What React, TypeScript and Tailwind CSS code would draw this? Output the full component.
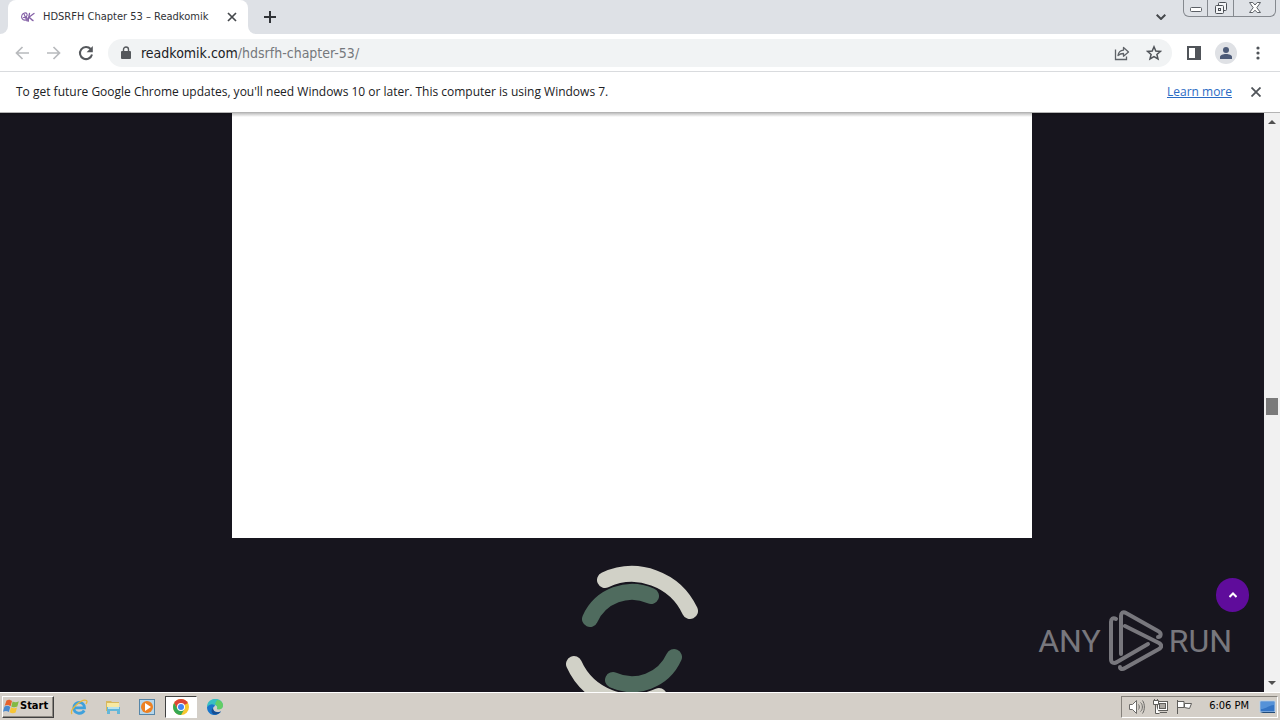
import type { ReactNode } from "react";

function TabStrip() {
  return (
    <header className="flex h-[34px] shrink-0 items-start bg-[#dee1e6]">
      <div className="flex h-full w-2 items-end bg-white">
        <div className="h-full w-2 rounded-br-lg bg-[#dee1e6]" />
      </div>
      <div className="flex h-full w-[240px] items-center rounded-t-lg bg-white pl-3 pr-2">
        <svg width="16" height="16" viewBox="0 0 16 16" fill="none" stroke="#8460a6" strokeLinecap="round" aria-hidden="true">
          <path d="M6 11C2 12 1 8 2 6S6 3 7 5 5 9 3.500 8.500M4 5l3 7M6.500 8l2 4" strokeWidth="1.100" />
          <path d="M9.500 4.500 8 12M14 4.500C12 6 10 7 9 8.500c1.500 0 2 2.500 4 3" strokeWidth="1.300" />
        </svg>
        <span className="ml-[7px] flex-1 whitespace-nowrap text-[11px] text-[#303236]">HDSRFH Chapter 53 – Readkomik</span>
        <button aria-label="Close tab" className="flex size-4 items-center justify-center">
          <svg width="10" height="10" viewBox="0 0 10 10" stroke="#45484c" strokeWidth="1.700"><path d="m1 1 8 8M9 1 1 9" /></svg>
        </button>
      </div>
      <div className="h-full w-2 bg-white">
        <div className="h-full w-2 rounded-bl-lg bg-[#dee1e6]" />
      </div>
      <button aria-label="New tab" className="flex h-full w-7 items-center justify-center">
        <svg width="12" height="12" viewBox="0 0 12 12" stroke="#303337" strokeWidth="2"><path d="M6 0v12M0 6h12" /></svg>
      </button>
      <div className="flex-1" />
      <button aria-label="Search tabs" className="mr-[14px] flex h-full w-4 items-center justify-center">
        <svg width="10" height="6" viewBox="0 0 10 6" fill="none" stroke="#45484c" strokeWidth="2"><path d="m.7.7 4.300 4.300L9.300.7" /></svg>
      </button>
      <div className="mr-1 flex h-[17px] rounded-b-md border border-t-0 border-[#85898f]">
        <button aria-label="Minimize" className="flex w-6 items-end justify-center border-r border-[#85898f] pb-1">
          <svg width="12" height="5" viewBox="0 0 12 5" fill="#fff" stroke="#5c6066"><rect x=".5" y=".5" width="11" height="4" rx="1" /></svg>
        </button>
        <button aria-label="Restore" className="flex w-[26px] items-center justify-center border-r border-[#85898f]">
          <svg width="14" height="14" viewBox="0 0 14 14" fill="#f4f5f7" stroke="#4c5056">
            <rect x="4.500" y="1.500" width="8" height="8" rx="1" />
            <rect x="1.500" y="4.500" width="8" height="8" rx="1" />
            <rect x="4.500" y="7.500" width="2" height="2" />
          </svg>
        </button>
        <button aria-label="Close" className="flex w-[41px] items-center justify-center">
          <svg width="12" height="12" viewBox="0 0 12 12" fill="#fff" stroke="#5c6066" strokeLinejoin="round">
            <path d="M.5.500h3.300L6 3l2.200-2.500h3.300L7.800 5.700l3.700 4.800H8.200L6 8.200l-2.200 2.300H.5l3.700-4.800Z" />
          </svg>
        </button>
      </div>
    </header>
  );
}

function Toolbar() {
  return (
    <nav className="flex h-[38px] shrink-0 items-center border-b border-[#d9dbde] bg-white pl-2 pr-[14px]">
      <button aria-label="Back" className="flex h-7 w-7 items-center justify-center">
        <svg width="14" height="14" viewBox="0 0 14 14" fill="none" stroke="#b8babd" strokeWidth="1.700"><path d="M14 7H1.500M7.500 1l-6 6 6 6" /></svg>
      </button>
      <button aria-label="Forward" className="ml-1 flex h-7 w-7 items-center justify-center">
        <svg width="14" height="14" viewBox="0 0 14 14" fill="none" stroke="#b8babd" strokeWidth="1.700"><path d="M0 7h12.500M6.500 1l6 6-6 6" /></svg>
      </button>
      <button aria-label="Reload" className="ml-1 flex h-7 w-7 items-center justify-center">
        <svg width="16" height="16" viewBox="0 0 16 16" fill="none" stroke="#55585c" strokeWidth="2">
          <path d="M12.700 4A6.100 6.100 0 1 0 14 9.500" /><path d="M14.800 1v6.200H8.600Z" fill="#55585c" stroke="none" />
        </svg>
      </button>
      <div className="ml-2 flex h-7 min-w-0 flex-1 items-center rounded-full bg-[#f1f3f4] pl-3 pr-[10px]">
        <svg width="12" height="14" viewBox="0 0 12 14" aria-hidden="true">
          <rect x="1" y="5" width="10" height="8" rx="1" fill="#55585c" />
          <path d="M3.500 6V3.500a2.500 2.500 0 0 1 5 0V6" fill="none" stroke="#55585c" strokeWidth="1.400" />
        </svg>
        <a href="#" className="ml-[9px] flex-1 whitespace-nowrap text-sm text-[#75787c]">
          <span className="text-[#202124]">readkomik.com</span>/hdsrfh-chapter-53/
        </a>
        <button aria-label="Share this page" className="flex size-4 items-center justify-center">
          <svg width="16" height="16" viewBox="0 0 16 16" fill="none" stroke="#5f6368" strokeWidth="1.300">
            <path d="M1.500 4.500v10h11v-3" />
            <path d="M4 10.500C4.500 7 6.500 5.400 9.500 5.200V2.500L14.500 7l-5 4.200V8.500C7.500 8.500 5.500 9 4 10.500Z" strokeLinejoin="round" />
          </svg>
        </button>
        <button aria-label="Bookmark this page" className="ml-4 flex size-4 items-center justify-center">
          <svg width="16" height="16" viewBox="0 0 16 16" fill="none" stroke="#505459" strokeWidth="1.500">
            <path d="m8 1.800 1.800 4.200 4.600.4-3.500 3 1.100 4.500L8 11.500l-4 2.400 1.100-4.500-3.500-3 4.600-.4Z" />
          </svg>
        </button>
      </div>
      <button aria-label="Side panel" className="ml-[14px] flex size-4 items-center justify-center">
        <svg width="14" height="14" viewBox="0 0 14 14"><path d="M0 0h14v14H0ZM2 2v10h6V2Z" fill="#505459" fillRule="evenodd" /></svg>
      </button>
      <button aria-label="Profile" className="ml-[13px] flex size-[22px] items-center justify-center rounded-full bg-[#dfe1e5]">
        <svg width="12" height="12" viewBox="0 0 12 12" fill="#4d5b78"><circle cx="6" cy="3" r="3" /><path d="M0 12v-2c0-2 3-3 6-3s6 1 6 3v2Z" /></svg>
      </button>
      <button aria-label="Menu" className="ml-[13px] flex h-7 w-4 items-center justify-center">
        <svg width="4" height="14" viewBox="0 0 4 14" fill="#505459"><circle cx="2" cy="2" r="1.600" /><circle cx="2" cy="7" r="1.600" /><circle cx="2" cy="12" r="1.600" /></svg>
      </button>
    </nav>
  );
}

function InfoBar() {
  return (
    <section className="flex h-[41px] shrink-0 items-center border-b border-[#b4b4b4] bg-white px-4 font-['Open_Sans','Noto_Sans',sans-serif] text-xs text-[#202124]">
      <p className="flex-1 whitespace-nowrap">To get future Google Chrome updates, you'll need Windows 10 or later. This computer is using Windows 7.</p>
      <a href="#" className="text-[#2a6bc4] underline">Learn more</a>
      <button aria-label="Dismiss" className="ml-4 flex size-4 items-center justify-center">
        <svg width="10" height="10" viewBox="0 0 10 10" stroke="#505459" strokeWidth="1.800"><path d="m.5.500 9 9M9.500.500l-9 9" /></svg>
      </button>
    </section>
  );
}

function Spinner() {
  return (
    <svg className="mx-auto block" width="200" height="200" viewBox="-100 -100 200 200" fill="none" strokeWidth="16" strokeLinecap="round" role="img" aria-label="Loading">
      <path d="M-27-58A64 64 0 0 1 58-27M27 58A64 64 0 0 1-58 26" stroke="#d1d1c7" />
      <path d="M-42-19A46 46 0 0 1 19-42M42 19A46 46 0 0 1-19 42" stroke="#4f6b5e" />
    </svg>
  );
}

function Watermark() {
  return (
    <div className="absolute bottom-5 right-8 flex items-center gap-[6px] font-['Roboto','Liberation_Sans',sans-serif] text-[32px] leading-[62px] text-[#78777d]">
      <span>ANY</span>
      <svg width="56" height="62" viewBox="4 3 56 62" fill="none" stroke="#78777d" strokeWidth="4" strokeLinejoin="round" strokeLinecap="round" aria-hidden="true">
        <path d="M18 47V9c0-3 2-5 5-3l32 18c4 2 3 6 0 6" />
        <path d="M13 12c-3-2-5 0-5 3v37c0 4 3 5 6 3l31-18" />
        <path d="m22 19 34 17c3 2 3 4 0 6L22 61c-3 2-5 1-5-1" />
      </svg>
      <span>RUN</span>
    </div>
  );
}

function Page() {
  return (
    <div className="flex min-h-0 flex-1">
      <main className="relative min-w-0 flex-1 overflow-hidden bg-[#17151e]">
        <div className="mx-auto h-[425px] w-full max-w-[800px] bg-white" />
        <Spinner />
        <div className="absolute inset-x-0 top-0 h-1 bg-linear-to-b from-black/25 to-transparent" />
        <button aria-label="Back to top" className="absolute bottom-20 right-[15px] flex h-[34px] w-[33px] items-center justify-center rounded-full bg-[#5f0c9b]">
          <svg width="8" height="6" viewBox="0 0 8 6" fill="none" stroke="#fff" strokeWidth="2"><path d="m.5 5 3.500-3.500L7.500 5" /></svg>
        </button>
        <Watermark />
      </main>
      <div className="flex w-4 shrink-0 flex-col items-center bg-[#f1f1f1]">
        <button aria-label="Scroll up" className="flex h-[18px] w-4 items-center justify-center">
          <svg width="8" height="4" viewBox="0 0 8 4" fill="#505050"><path d="M0 4 4 0l4 4Z" /></svg>
        </button>
        <div className="basis-[267px]" />
        <div className="h-[17px] w-3 bg-[#7b7b7b]" />
        <div className="flex-1" />
        <button aria-label="Scroll down" className="flex h-[18px] w-4 items-center justify-center">
          <svg width="8" height="4" viewBox="0 0 8 4" fill="#505050"><path d="m0 0 4 4 4-4Z" /></svg>
        </button>
      </div>
    </div>
  );
}

function TaskButton({ label, active = false, children }: { label: string; active?: boolean; children: ReactNode }) {
  return (
    <button
      aria-label={label}
      className={
        active
          ? "flex h-[22px] w-8 items-center justify-center border border-b-white border-l-[#404040] border-r-white border-t-[#404040] bg-white"
          : "flex h-[22px] w-8 items-center justify-center"
      }
    >
      {children}
    </button>
  );
}

function Taskbar() {
  return (
    <footer className="flex h-[28px] shrink-0 items-center border-t border-white bg-[#d4cfc8] pl-[2px] pr-[2px]">
      <button className="flex h-[22px] w-[52px] items-center gap-px border border-b-[#404040] border-l-white border-r-[#404040] border-t-white text-[11px] font-bold text-black shadow-[inset_-1px_-1px_0_#8d8982]">
        <svg width="16" height="16" viewBox="0 0 16 16" aria-hidden="true">
          <path d="M3.500 1.500C6 0 7.500 1 9 2L7.600 7.200C5.500 5.500 3.500 5.700 1.700 6.700Z" fill="#e7622c" />
          <path d="M9.600 2.500c2 1 4 1 6.200-.2l-1.500 5.200c-2 1-4 1-6-.1Z" fill="#82b944" />
          <path d="M1.400 7.700c2-1.300 4-1.100 5.900.2L5.800 13c-1.700-1.400-3.800-1.300-5.800-.3Z" fill="#4a89ce" />
          <path d="M8 8.300c2 1.100 4 1.200 6 .2l-1.400 5c-2 1-4 .9-6-.3Z" fill="#f6c536" />
        </svg>
        Start
      </button>
      <div className="ml-[9px] flex items-center gap-[2px]">
        <TaskButton label="Internet Explorer">
          <svg width="18" height="18" viewBox="0 0 18 18" fill="none">
            <path d="M4 9.800h10.500C14.500 2.500 4 2.800 3.800 9.800c0 6.200 8 7 10.400 2.700" stroke="#3fa1dc" strokeWidth="2.800" />
            <path d="M2 16C-1 12 12 0 16.500 2.500c1 .7.200 2.500-.5 3.500" stroke="#e6b83d" strokeWidth="1.300" />
          </svg>
        </TaskButton>
        <TaskButton label="Windows Explorer">
          <svg width="18" height="18" viewBox="0 0 18 18">
            <path d="M2 3h5l1 1h7v9H2Z" fill="#d8b85e" /><path d="M3 5h12v7H3Z" fill="#f8e9a2" />
            <path d="M3 9h13v7h-3v-3H6v3H3Z" fill="#64b7d9" /><path d="M4 9h11v2H4Z" fill="#b9e2ed" />
          </svg>
        </TaskButton>
        <TaskButton label="Media Player">
          <svg width="16" height="16" viewBox="0 0 16 16">
            <rect x=".5" y=".5" width="15" height="15" fill="#b5d6eb" stroke="#5686a8" />
            <circle cx="8" cy="8" r="6" fill="#ed8122" /><path d="m6 4 6 4-6 4Z" fill="#fff" />
          </svg>
        </TaskButton>
        <TaskButton label="Google Chrome" active>
          <svg width="16" height="16" viewBox="0 0 16 16">
            <circle cx="8" cy="8" r="8" fill="#f7c72f" />
            <path d="M1.100 4A8 8 0 0 1 14.900 4L8 8l-3.500 2Z" fill="#dc4537" />
            <path d="M1.100 4A8 8 0 0 0 8 16l3.500-6H4.500Z" fill="#35a853" />
            <circle cx="8" cy="8" r="4" fill="#fff" /><circle cx="8" cy="8" r="3" fill="#4285f4" />
          </svg>
        </TaskButton>
        <TaskButton label="Microsoft Edge">
          <svg width="16" height="16" viewBox="0 0 16 16">
            <path d="M0 8C0-2 15-3 16 6c0 4-4 5-6 4 2-4-5-6-10-2Z" fill="#39bfc3" />
            <path d="M10 1c4 0 6 3 6 5.500 0 3.500-4 4.500-6 3.500 1-2 0-4-2-5Z" fill="#63cd65" />
            <path d="M0 8c3-4 8-3 8-1-4 2-2 8 6 5.500C9 19 0 16 0 8Z" fill="#1976cb" />
            <path d="M6 9c0 4 4 5 8 3.500-2 3-6 3.500-8 2.500-2-2-2-4 0-6Z" fill="#174e92" />
          </svg>
        </TaskButton>
      </div>
      <div className="flex-1" />
      <div className="flex h-[22px] items-center border border-b-white border-l-[#85817b] border-r-white border-t-[#85817b] pl-[6px] pr-px">
        <svg width="18" height="16" viewBox="0 0 18 16" fill="#fff" stroke="#6c6b69" aria-label="Volume" role="img">
          <path d="M1.500 5.500h3l4-4v13l-4-4h-3Z" /><path d="M10.500 5.500c1 1 1 4 0 5M12.500 3.500c2.500 2 2.500 7 0 9M14.500 1.500c2.500 3.500 2.500 9.500 0 13" fill="none" />
        </svg>
        <svg className="ml-[6px]" width="17" height="16" viewBox="0 0 17 16" fill="#fff" stroke="#5f5e5b" aria-label="Network" role="img">
          <rect x="5.500" y="2.500" width="10" height="9" /><rect x="7.500" y="4.500" width="6" height="5" fill="#aaa7a2" />
          <path d="M8 13.500h7M3.500 6v8.500h4M1.500 1.500h5v4h-5ZM2.500 0v2M5.500 0v2" />
        </svg>
        <svg className="ml-[7px]" width="17" height="16" viewBox="0 0 17 16" fill="#fff" stroke="#5f5e5b" aria-label="Action Center" role="img">
          <path d="M1.500 1v14M2 2.500h6v6H2M8.500 4.500h7l-2 5-5-1Z" />
        </svg>
        <time className="ml-4 whitespace-nowrap text-[11px] text-black">6:06 PM</time>
        <button aria-label="Show desktop" className="ml-[10px] flex h-5 w-[17px] items-center justify-center">
          <svg width="17" height="14" viewBox="0 0 17 14"><path d="M1 1h15v11H1Z" fill="#3474c4" stroke="#b8d3ed" /><path d="M2 2h13v3C10 5 7 9 2 9Z" fill="#5592d8" /><path d="M1 12h15v1H4Z" fill="#214b79" /></svg>
        </button>
      </div>
    </footer>
  );
}

export default function App() {
  return (
    <div className="flex h-screen flex-col overflow-hidden font-['DejaVu_Sans_Condensed','Noto_Sans',sans-serif]">
      <TabStrip />
      <Toolbar />
      <InfoBar />
      <Page />
      <Taskbar />
    </div>
  );
}
